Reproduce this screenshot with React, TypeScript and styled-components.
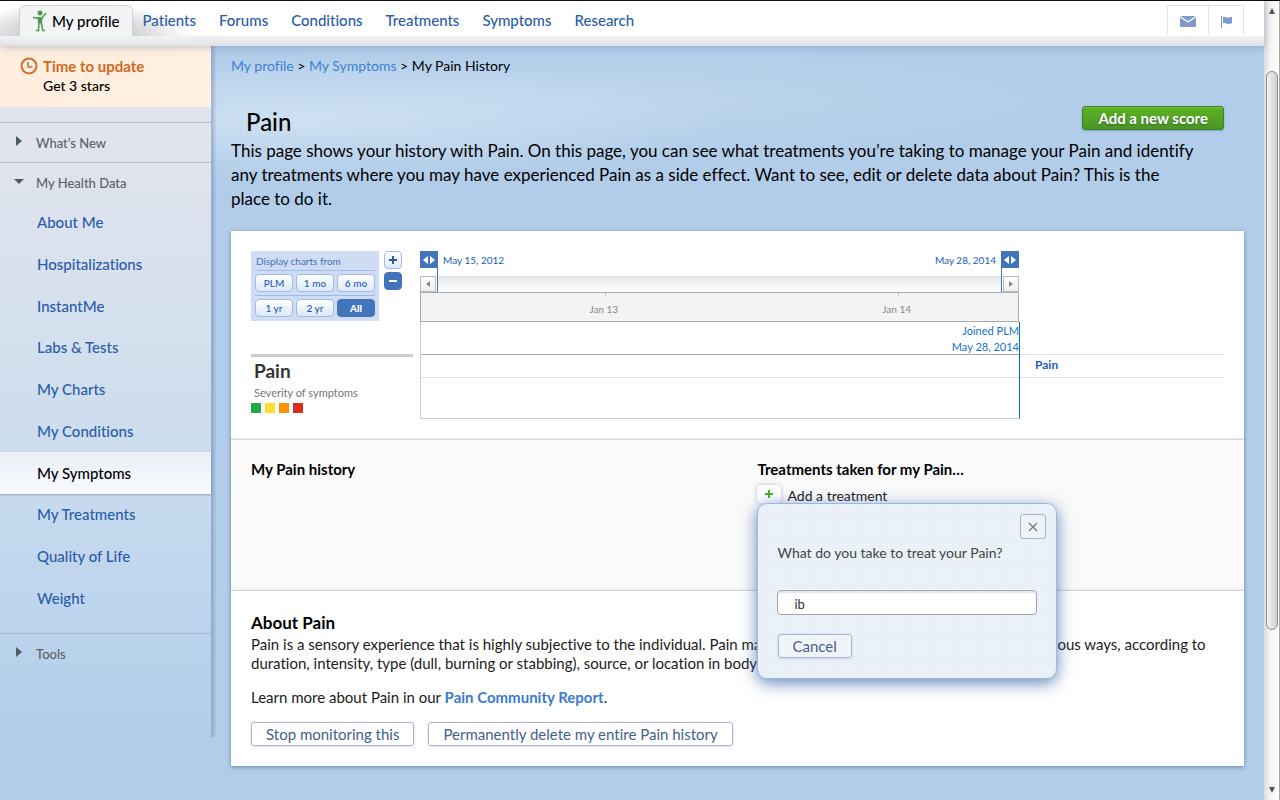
import React from "react";
import styled, { createGlobalStyle, css } from "styled-components";

const link = "#2a5caa";
const chartBlue = "#4274bc";
const chartText = "#1a5cc0";

const GlobalStyle = createGlobalStyle`
  *, *::before, *::after { box-sizing: border-box; }
  body {
    margin: 0;
    background: #b1cde9;
    color: #000;
    font-family: Lato, "Liberation Sans", sans-serif;
    font-size: 14px;
    font-variant-ligatures: none;
    line-height: 18px;
  }
  h1, h2, h3, p, ul { margin: 0; padding: 0; }
  ul { list-style: none; }
  a { text-decoration: none; }
  button, input { font-family: inherit; font-variant-ligatures: none; }
`;

const Window = styled.div`
  display: flex;
  min-height: 100vh;
  border-top: 1px solid #000;
`;

const Page = styled.div`
  flex: 1;
  min-width: 0;
  background:
    radial-gradient(ellipse 420px 60px at 300px 118px, rgba(208, 225, 243, 0.95), rgba(208, 225, 243, 0)),
    radial-gradient(ellipse 560px 60px at 560px 100px, rgba(200, 219, 241, 0.6), rgba(200, 219, 241, 0)),
    #b1cde9;
`;

/* Window scroll bar */

const ScrollTrack = styled.div`
  display: flex;
  flex-direction: column;
  width: 16px;
  padding: 6px 1px 6px 2px;
  border-right: 1px solid #a9a99c;
  background: linear-gradient(to right, #dcdcdc, #f4f4f4 40%, #fff);
`;

const ScrollArrow = styled.svg`
  width: 12px;
  height: 8px;
  fill: #555;
`;

const ScrollThumb = styled.div`
  flex: 0 0 71%;
  margin: 56px 0 auto;
  border: 1px solid #8e8e8e;
  border-radius: 6px;
  background: linear-gradient(to right, #f2f2f2, #cfcfcf);
`;

/* Header */

const Header = styled.header`
  position: relative;
  z-index: 2;
  display: flex;
  justify-content: space-between;
  height: 45px;
  padding: 4px 20px 0 19px;
  background:
    radial-gradient(ellipse 115px 34px at 76px 35px, #c9cacd 40%, rgba(255, 255, 255, 0)) 0 0 / 100% 35px no-repeat,
    linear-gradient(#fff 35px, #f2f3f6 35px, #dfe1e6 45px);
  box-shadow: 0 1px 8px rgba(80, 120, 160, 0.4);
`;

const Nav = styled.nav`
  display: flex;
  gap: 23px;
  height: 31px;
`;

const NavLink = styled.a<{ $current?: boolean }>`
  display: flex;
  align-items: center;
  padding-bottom: 2px;
  color: ${link};
  font-size: 15px;
  font-weight: 500;
  ${(p) =>
    p.$current &&
    css`
      gap: 4px;
      margin-right: -13px;
      padding: 0 12px;
      border: 1px solid #cfd1d4;
      border-bottom: 0;
      border-radius: 6px 6px 0 0;
      background: #f2f4f6;
      color: #000;
    `}
`;

const Figure = styled.svg`
  width: 16px;
  height: 22px;
  color: #4a9e4c;
`;

const Tools = styled.div`
  display: flex;
  height: 29px;
  border: 1px solid #e6e6ea;
  border-bottom: 0;
`;

const ToolButton = styled.button<{ $wide?: boolean }>`
  display: flex;
  align-items: center;
  justify-content: center;
  width: ${(p) => (p.$wide ? 40 : 35)}px;
  padding: 3px 0 0;
  border: 0;
  background: #fff;
  color: #7c9acb;
  & + & { border-left: 1px solid #e6e6ea; }
`;

/* Side bar */

const Body = styled.div`
  display: flex;
  align-items: flex-start;
`;

const Sidebar = styled.aside`
  position: relative;
  flex: 0 0 211px;
  padding-bottom: 64px;
  background: linear-gradient(
    rgba(226, 228, 236, 1) 80px,
    rgba(222, 228, 238, 0.9) 200px,
    rgba(215, 227, 239, 0.75) 380px,
    rgba(202, 220, 242, 0.55) 550px,
    rgba(190, 212, 238, 0)
  );
  &::after {
    content: "";
    position: absolute;
    top: 0;
    bottom: 0;
    left: 100%;
    width: 6px;
    background: linear-gradient(to right, rgba(70, 100, 140, 0.35), rgba(70, 100, 140, 0));
  }
`;

const UpdateBox = styled.a`
  display: flex;
  gap: 5px;
  height: 61px;
  margin-bottom: 15px;
  padding: 11px 20px;
  background: linear-gradient(to right, #ffeedd, #fff0e1);
  color: #000;
  font-weight: 500;
  line-height: 19px;
`;

const UpdateTitle = styled.strong`
  display: block;
  color: #d4661e;
  font-size: 15px;
  font-weight: 700;
`;

const Group = styled.section`
  border-top: 1px dotted #9aa0a8;
`;

const GroupToggle = styled.button`
  display: flex;
  align-items: center;
  gap: 12px;
  width: 100%;
  height: 39px;
  padding: 0 12px;
  border: 0;
  background: none;
  color: #5c6268;
  font-size: 13px;
  font-weight: 500;
  line-height: 18px;
`;

const ToggleArrow = styled.svg`
  width: 12px;
  height: 12px;
  margin-top: -3px;
  fill: #4e5b60;
`;

const SideList = styled.ul`
  display: grid;
  grid-auto-rows: 1fr;
  height: 417px;
  margin-bottom: 14px;
`;

const SideLink = styled.a<{ $current?: boolean }>`
  display: flex;
  align-items: center;
  height: 100%;
  padding: 0 0 1px 37px;
  color: ${link};
  font-size: 15px;
  font-weight: 500;
  ${(p) =>
    p.$current &&
    css`
      background: linear-gradient(#eaeef6, #f8fafd);
      box-shadow: 0 1px 2px rgba(90, 110, 140, 0.5);
      color: #000;
    `}
`;

/* Main column */

const Main = styled.main`
  flex: 1;
  min-width: 0;
  padding: 11px 20px 34px;
`;

const Crumbs = styled.nav`
  margin-bottom: 31px;
  a { color: #3d7fd4; }
`;

const TitleRow = styled.div`
  display: flex;
  align-items: flex-start;
  justify-content: space-between;
  height: 33px;
  padding: 0 20px 0 15px;
`;

const Title = styled.h1`
  font-size: 24px;
  font-weight: 500;
  line-height: 31px;
`;

const ScoreButton = styled.button`
  height: 24px;
  padding: 0 15px;
  border: 1px solid #3c8426;
  border-radius: 3px;
  background: linear-gradient(#5fb521, #4a9427);
  box-shadow: inset 0 1px 0 #74c043, 0 1px 2px rgba(60, 100, 140, 0.4);
  color: #fff;
  font-size: 15px;
  font-weight: 700;
  line-height: 18px;
  text-shadow: 0 1px 2px #2f6a30;
`;

const Intro = styled.p`
  margin-bottom: 20px;
  padding-right: 46px;
  font-size: 17px;
  line-height: 24px;
`;

const Panel = styled.div`
  background: #fff;
  box-shadow: 0 1px 4px rgba(50, 85, 130, 0.6);
`;

/* Chart */

const ChartSection = styled.section`
  display: grid;
  grid-template-columns: 162px minmax(0, 1fr) 197px;
  column-gap: 7px;
  padding: 20px;
`;

const Controls = styled.div`
  display: flex;
  align-items: flex-start;
  gap: 5px;
  height: 103px;
`;

const RangeBox = styled.div`
  display: grid;
  grid-template-columns: repeat(3, 38px);
  column-gap: 3px;
  row-gap: 3px;
  width: 128px;
  padding: 2px 4px 4px;
  background: #cfddf4;
`;

const RangeLabel = styled.span`
  grid-column: 1 / -1;
  height: 18px;
  padding-left: 1px;
  border-bottom: 1px solid #9fbce6;
  color: #3f6fb8;
  font-size: 10px;
  line-height: 17px;
`;

const RangeRule = styled.span`
  grid-column: 1 / -1;
  height: 1px;
  background: #9fbce6;
`;

const RangeButton = styled.button<{ $on?: boolean }>`
  height: 18px;
  padding: 0;
  border: 1px solid ${(p) => (p.$on ? chartBlue : "#9fbce6")};
  border-radius: 4px;
  background: ${(p) => (p.$on ? chartBlue : "linear-gradient(#fff, #dde8f8)")};
  color: ${(p) => (p.$on ? "#fff" : chartText)};
  font-size: 10px;
  font-weight: ${(p) => (p.$on ? 900 : 500)};
  line-height: 14px;
`;

const ZoomButtons = styled.div`
  display: flex;
  flex-direction: column;
  gap: 3px;
`;

const ZoomButton = styled(RangeButton)`
  display: flex;
  align-items: center;
  justify-content: center;
  width: 18px;
`;

const Series = styled.div`
  padding-top: 2px;
  border-top: 3px solid #ccc;
`;

const SeriesName = styled.h2`
  padding-left: 3px;
  color: #333;
  font-size: 19px;
  font-weight: 700;
  line-height: 24px;
`;

const SeriesNote = styled.p`
  margin-bottom: 1px;
  padding-left: 3px;
  color: #777;
  font-size: 11px;
  line-height: 19px;
`;

const Swatches = styled.div`
  display: flex;
  gap: 4px;
`;

const Swatch = styled.span<{ $color: string }>`
  width: 10px;
  height: 10px;
  background: ${(p) => p.$color};
`;

const DateRow = styled.div`
  display: flex;
  justify-content: space-between;
  height: 17px;
  padding-right: 1px;
  color: ${chartText};
  font-size: 10px;
  line-height: 19px;
`;

const DateEnd = styled.div`
  display: flex;
  gap: 5px;
`;

const Handle = styled.button`
  display: flex;
  align-items: center;
  justify-content: center;
  width: 18px;
  height: 17px;
  padding: 0;
  border: 0;
  background: ${chartBlue};
`;

const Scroller = styled.div`
  display: flex;
  justify-content: space-between;
  height: 24px;
  padding: 8px 1px 0 0;
`;

const ScrollerButton = styled.button`
  display: flex;
  align-items: center;
  justify-content: center;
  width: 16px;
  padding: 0;
  border: 1px solid #bbb;
  background: linear-gradient(#fff, #eee);
`;

const ScrollerBar = styled.div`
  flex: 1;
  margin: -8px 1px 0;
  border: solid ${chartBlue};
  border-width: 0 1px;
  background: linear-gradient(#fff 8px, #e6e6e6 8px, #fdfdfd);
`;

const Axis = styled.div`
  display: grid;
  grid-template-columns: 61% 1fr;
  height: 30px;
  margin-right: 1px;
  border: 1px solid #aaa;
  background: #f3f3f3;
  color: #888;
  font-size: 10px;
  line-height: 16px;
`;

const Tick = styled.span<{ $right: number }>`
  height: 28px;
  padding: 8px ${(p) => p.$right}px 0 0;
  background: linear-gradient(#a9c8e4, #a9c8e4) right ${(p) => p.$right + 12}px top / 1px 4px no-repeat;
  text-align: right;
`;

const Plot = styled.div`
  border: solid #ccc;
  border-width: 0 0 1px 1px;
  border-right: 1px solid #0e69c4;
`;

const Joined = styled.div`
  height: 33px;
  padding-top: 1px;
  overflow: hidden;
  border-bottom: 1px solid #aaa;
  color: #1272d4;
  font-size: 11px;
  line-height: 16px;
  text-align: right;
`;

const PlotRow = styled.div`
  height: 23px;
  border-bottom: 1px solid #e2e2e2;
`;

const PlotRest = styled.div`
  height: 40px;
`;

const Legend = styled.div`
  height: 24px;
  margin: 103px 0 0 -7px;
  padding-left: 15px;
  border: solid #e2e2e2;
  border-width: 1px 0;
  color: ${chartText};
  font-size: 12px;
  font-weight: 700;
  line-height: 20px;
`;

/* History and treatments */

const HistorySection = styled.section`
  display: grid;
  grid-template-columns: 1fr 1fr;
  gap: 40px;
  min-height: 152px;
  padding: 20px;
  border: solid #d6d6d6;
  border-width: 1px 0;
  background: linear-gradient(#fafafa 146px, #f0f0f0);
  box-shadow: 0 -1px 2px rgba(0, 0, 0, 0.1);
`;

const SmallHeading = styled.h3`
  font-size: 15px;
  font-weight: 700;
  line-height: 18px;
`;

const AddRow = styled.div`
  position: relative;
  display: flex;
  align-items: flex-start;
  gap: 7px;
  margin: 7px 0 0 -1px;
`;

const AddButton = styled.button`
  display: flex;
  align-items: center;
  justify-content: center;
  width: 24px;
  height: 18px;
  padding: 0;
  border: 0;
  border-radius: 4px;
  background: #fdfdfe;
  box-shadow: 0 0 4px rgba(120, 130, 170, 0.5);
`;

const AddLabel = styled.label`
  padding-top: 2px;
  color: #1c1c1c;
`;

const Dialog = styled.form`
  position: absolute;
  z-index: 3;
  top: 18px;
  left: 0;
  width: 300px;
  height: 176px;
  padding: 10px 10px 20px 20px;
  border: 1px solid #9cb9dc;
  border-radius: 10px;
  background:
    radial-gradient(rgba(255, 255, 255, 0.35) 1px, transparent 1px) 0 0 / 3px 3px,
    #e9f0f7;
  box-shadow: 0 4px 16px rgba(50, 95, 165, 0.75);
`;

const Close = styled.button`
  display: flex;
  align-items: center;
  justify-content: center;
  width: 26px;
  height: 25px;
  margin-left: auto;
  padding: 0;
  border: 1px solid #a9b3cf;
  border-radius: 3px;
  background: #eef3f8;
`;

const Question = styled.label`
  display: block;
  margin-top: 5px;
  color: #444;
`;

const TreatmentInput = styled.input`
  display: block;
  width: 260px;
  height: 25px;
  margin: 28px 0 19px -1px;
  padding: 2px 17px 0;
  border: 1px solid #a5a5b4;
  border-radius: 4px;
  outline: 0;
  background: #fff;
  box-shadow: inset 0 2px 1px #e4e2f4;
  color: #333;
  font-size: 13px;
`;

const PlainButton = styled.button`
  height: 24px;
  padding: 0 14px;
  border: 1px solid #a9b3cf;
  border-radius: 3px;
  background: rgba(255, 255, 255, 0.3);
  box-shadow: 0 1px 3px rgba(120, 130, 180, 0.25);
  color: #44618a;
  font-size: 15px;
  line-height: 18px;
`;

/* About */

const AboutSection = styled.section`
  padding: 21px 20px 20px;
  color: #1c1c1c;
  font-size: 15px;
  line-height: 19px;
`;

const AboutHeading = styled.h2`
  margin-bottom: 1px;
  color: #000;
  font-size: 17px;
  font-weight: 700;
  line-height: 22px;
`;

const LearnMore = styled.p`
  margin: 15px 0;
  a { color: #3a7bd0; font-weight: 700; }
`;

const Actions = styled.div`
  display: flex;
  gap: 14px;
`;

const navItems = ["Patients", "Forums", "Conditions", "Treatments", "Symptoms", "Research"];

const sideItems = [
  "About Me",
  "Hospitalizations",
  "InstantMe",
  "Labs & Tests",
  "My Charts",
  "My Conditions",
  "My Symptoms",
  "My Treatments",
  "Quality of Life",
  "Weight",
];

const TriangleRight = () => (
  <ToggleArrow viewBox="0 0 12 12" aria-hidden="true">
    <path d="M4 1l6 5-6 5z" />
  </ToggleArrow>
);

const TriangleDown = () => (
  <ToggleArrow viewBox="0 0 12 12" aria-hidden="true">
    <path d="M2 4h10l-5 5z" />
  </ToggleArrow>
);

const HandleArrows = () => (
  <svg width="12" height="8" viewBox="0 0 12 8" fill="#fff" aria-hidden="true">
    <path d="M5 0v8L0 4zM7 0v8l5-4z" />
  </svg>
);

export default function App() {
  return (
    <>
      <GlobalStyle />
      <Window>
        <Page>
          <Header>
            <Nav>
              <NavLink href="#profile" $current>
                <Figure viewBox="0 0 16 22" fill="none" stroke="currentColor" aria-hidden="true">
                  <circle cx="8" cy="3" r="2.5" fill="currentColor" stroke="none" />
                  <path d="M1 7.5l4 .5h5l4-5" strokeWidth="1.5" />
                  <path d="M5.5 7.5h5l-.5 6H6z" fill="currentColor" stroke="none" />
                  <path d="M7 13l-.5 7.4H4M9.300 13l1.500 7.400h2" strokeWidth="1.5" />
                </Figure>
                My profile
              </NavLink>
              {navItems.map((item) => (
                <NavLink key={item} href={`#${item.toLowerCase()}`}>
                  {item}
                </NavLink>
              ))}
            </Nav>
            <Tools>
              <ToolButton $wide aria-label="Messages">
                <svg width="16" height="11" viewBox="0 0 16 11" aria-hidden="true">
                  <rect width="16" height="11" rx="1" fill="currentColor" />
                  <path d="M0 .5l8 5.500 8-5.500" fill="none" stroke="#fff" strokeWidth="1.200" />
                </svg>
              </ToolButton>
              <ToolButton aria-label="Flags">
                <svg width="11" height="12" viewBox="0 0 11 12" fill="currentColor" aria-hidden="true">
                  <path d="M0 0h1v12H0zM2 1c2-1 3 .8 5 .5 1.500-.2 2-.7 4-.5v6.500c-2-.4-2.800.5-4.500.4C4.500 7.700 4 6.500 2 7.500z" />
                </svg>
              </ToolButton>
            </Tools>
          </Header>

          <Body>
            <Sidebar>
              <UpdateBox href="#update">
                <svg width="18" height="18" viewBox="0 0 18 18" fill="none" stroke="#d0702e" strokeWidth="2" aria-hidden="true">
                  <circle cx="9" cy="9" r="7.500" />
                  <path d="M8 5v5h4.500" strokeWidth="1.600" />
                </svg>
                <span>
                  <UpdateTitle>Time to update</UpdateTitle>
                  Get 3 stars
                </span>
              </UpdateBox>
              <Group>
                <GroupToggle>
                  <TriangleRight />
                  What’s New
                </GroupToggle>
              </Group>
              <Group>
                <GroupToggle aria-expanded="true">
                  <TriangleDown />
                  My Health Data
                </GroupToggle>
                <SideList>
                  {sideItems.map((item) => (
                    <li key={item}>
                      <SideLink href="#data" $current={item === "My Symptoms"}>
                        {item}
                      </SideLink>
                    </li>
                  ))}
                </SideList>
              </Group>
              <Group>
                <GroupToggle>
                  <TriangleRight />
                  Tools
                </GroupToggle>
              </Group>
            </Sidebar>

            <Main>
              <Crumbs>
                <a href="#profile">My profile</a> &gt; <a href="#symptoms">My Symptoms</a> &gt; My Pain History
              </Crumbs>
              <TitleRow>
                <Title>Pain</Title>
                <ScoreButton>Add a new score</ScoreButton>
              </TitleRow>
              <Intro>
                This page shows your history with Pain. On this page, you can see what treatments you’re taking to
                manage your Pain and identify any treatments where you may have experienced Pain as a side effect. Want
                to see, edit or delete data about Pain? This is the place to do it.
              </Intro>

              <Panel>
                <ChartSection>
                  <div>
                    <Controls>
                      <RangeBox>
                        <RangeLabel>Display charts from</RangeLabel>
                        <RangeButton>PLM</RangeButton>
                        <RangeButton>1 mo</RangeButton>
                        <RangeButton>6 mo</RangeButton>
                        <RangeRule />
                        <RangeButton>1 yr</RangeButton>
                        <RangeButton>2 yr</RangeButton>
                        <RangeButton $on>All</RangeButton>
                      </RangeBox>
                      <ZoomButtons>
                        <ZoomButton aria-label="Zoom in">
                          <svg width="8" height="8" viewBox="0 0 8 8" fill="#2a5caa" aria-hidden="true">
                            <path d="M3 0h2v3h3v2H5v3H3V5H0V3h3z" />
                          </svg>
                        </ZoomButton>
                        <ZoomButton $on aria-label="Zoom out">
                          <svg width="8" height="8" viewBox="0 0 8 8" fill="#fff" aria-hidden="true">
                            <path d="M0 3h8v2H0z" />
                          </svg>
                        </ZoomButton>
                      </ZoomButtons>
                    </Controls>
                    <Series>
                      <SeriesName>Pain</SeriesName>
                      <SeriesNote>Severity of symptoms</SeriesNote>
                      <Swatches>
                        <Swatch $color="#1fab49" />
                        <Swatch $color="#fddc30" />
                        <Swatch $color="#ff9200" />
                        <Swatch $color="#da2f1c" />
                      </Swatches>
                    </Series>
                  </div>

                  <div>
                    <DateRow>
                      <DateEnd>
                        <Handle aria-label="Start of range">
                          <HandleArrows />
                        </Handle>
                        May 15, 2012
                      </DateEnd>
                      <DateEnd>
                        May 28, 2014
                        <Handle aria-label="End of range">
                          <HandleArrows />
                        </Handle>
                      </DateEnd>
                    </DateRow>
                    <Scroller>
                      <ScrollerButton aria-label="Earlier">
                        <svg width="4" height="6" viewBox="0 0 4 6" fill="#888" aria-hidden="true">
                          <path d="M4 0v6L0 3z" />
                        </svg>
                      </ScrollerButton>
                      <ScrollerBar />
                      <ScrollerButton aria-label="Later">
                        <svg width="4" height="6" viewBox="0 0 4 6" fill="#888" aria-hidden="true">
                          <path d="M0 0v6l4-3z" />
                        </svg>
                      </ScrollerButton>
                    </Scroller>
                    <Axis>
                      <Tick $right={167}>Jan 13</Tick>
                      <Tick $right={107}>Jan 14</Tick>
                    </Axis>
                    <Plot>
                      <Joined>
                        Joined PLM
                        <br />
                        May 28, 2014
                      </Joined>
                      <PlotRow />
                      <PlotRest />
                    </Plot>
                  </div>

                  <Legend>Pain</Legend>
                </ChartSection>

                <HistorySection>
                  <SmallHeading>My Pain history</SmallHeading>
                  <div>
                    <SmallHeading>Treatments taken for my Pain…</SmallHeading>
                    <AddRow>
                      <AddButton id="add-treatment">
                        <svg width="8" height="8" viewBox="0 0 8 8" fill="#4fae2c" aria-hidden="true">
                          <path d="M3 0h2v3h3v2H5v3H3V5H0V3h3z" />
                        </svg>
                      </AddButton>
                      <AddLabel htmlFor="add-treatment">Add a treatment</AddLabel>
                      <Dialog>
                        <Close type="button" aria-label="Close">
                          <svg width="10" height="10" viewBox="0 0 10 10" stroke="#777" strokeWidth="1.200" aria-hidden="true">
                            <path d="M1 1l8 8M9 1L1 9" />
                          </svg>
                        </Close>
                        <Question htmlFor="treatment">What do you take to treat your Pain?</Question>
                        <TreatmentInput id="treatment" type="text" defaultValue="ib" />
                        <PlainButton type="button">Cancel</PlainButton>
                      </Dialog>
                    </AddRow>
                  </div>
                </HistorySection>

                <AboutSection>
                  <AboutHeading>About Pain</AboutHeading>
                  <p>
                    Pain is a sensory experience that is highly subjective to the individual. Pain may be mild or
                    severe, and is experienced in various ways, according to duration, intensity, type (dull, burning
                    or stabbing), source, or location in body.
                  </p>
                  <LearnMore>
                    Learn more about Pain in our <a href="#report">Pain Community Report</a>.
                  </LearnMore>
                  <Actions>
                    <PlainButton>Stop monitoring this</PlainButton>
                    <PlainButton>Permanently delete my entire Pain history</PlainButton>
                  </Actions>
                </AboutSection>
              </Panel>
            </Main>
          </Body>
        </Page>

        <ScrollTrack aria-hidden="true">
          <ScrollArrow viewBox="0 0 12 8">
            <path d="M6 1l3 6H3z" />
          </ScrollArrow>
          <ScrollThumb />
          <ScrollArrow viewBox="0 0 12 8">
            <path d="M6 7l3-6H3z" />
          </ScrollArrow>
        </ScrollTrack>
      </Window>
    </>
  );
}
